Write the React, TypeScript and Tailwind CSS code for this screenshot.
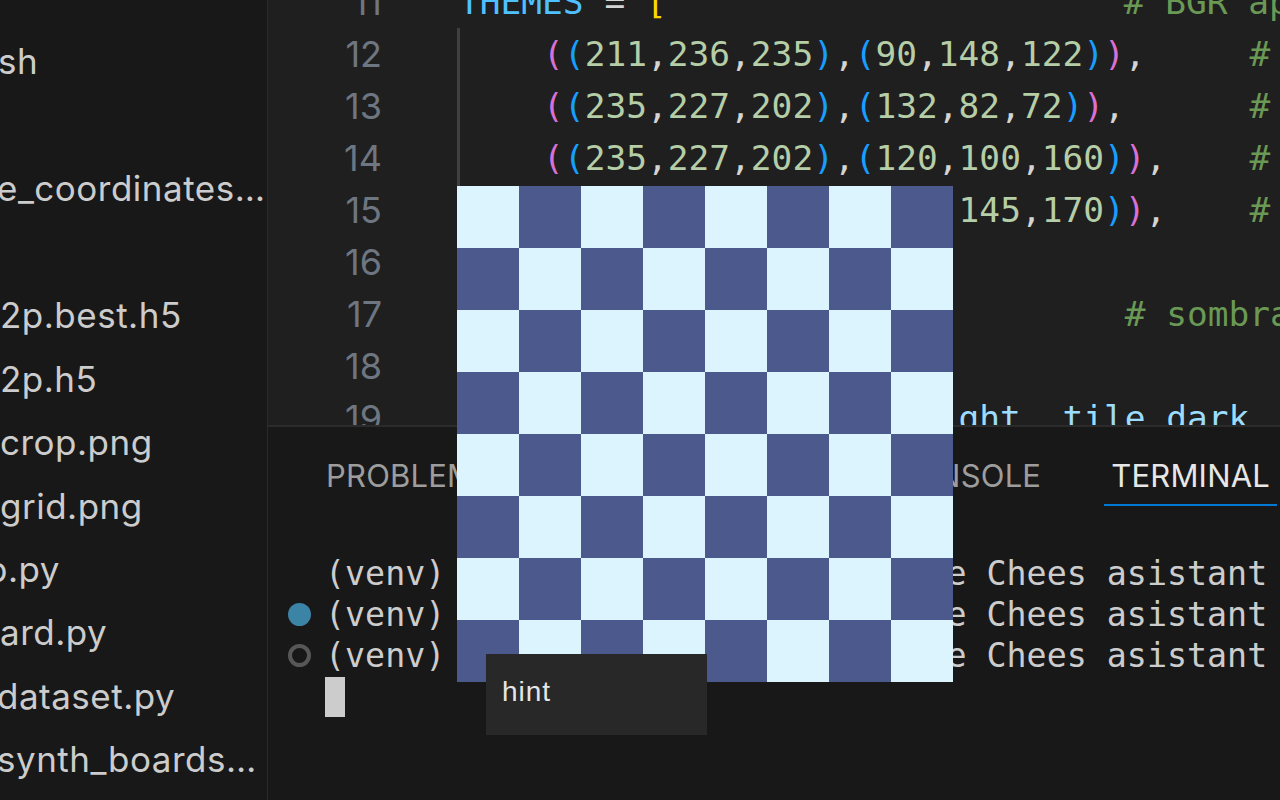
const files = [
  { name: "sh", shift: "-ml-[2px]" },
  { name: "", shift: "" },
  { name: "e_coordinates…", shift: "-ml-[3px]" },
  { name: "", shift: "" },
  { name: "2p.best.h5", shift: "" },
  { name: "2p.h5", shift: "" },
  { name: "crop.png", shift: "" },
  { name: "grid.png", shift: "" },
  { name: "p.py", shift: "-ml-[14px]" },
  { name: "ard.py", shift: "" },
  { name: "dataset.py", shift: "-ml-[3px]" },
  { name: "synth_boards…", shift: "-ml-[3px]" },
];

const C = {
  var: "text-[#4fc1ff]",
  id: "text-[#9cdcfe]",
  op: "text-[#d4d4d4]",
  br: "text-[#ffd700]",
  p1: "text-[#da70d6]",
  p2: "text-[#179fff]",
  num: "text-[#b5cea8]",
  cm: "text-[#6a9955]",
  kw: "text-[#569cd6]",
  fn: "text-[#dcdcaa]",
};

type Tok = [string, string];

function Tuple({ a, b }: { a: string[]; b: string[] }) {
  const nums = (xs: string[]) =>
    xs.map((n, i) => (
      <span key={i}>
        <span className={C.num}>{n}</span>
        {i < xs.length - 1 && <span className={C.op}>,</span>}
      </span>
    ));
  return (
    <>
      {"    "}
      <span className={C.p1}>(</span>
      <span className={C.p2}>(</span>
      {nums(a)}
      <span className={C.p2}>)</span>
      <span className={C.op}>,</span>
      <span className={C.p2}>(</span>
      {nums(b)}
      <span className={C.p2}>)</span>
      <span className={C.p1}>)</span>
      <span className={C.op}>,</span>
    </>
  );
}

function Line({ children }: { children?: React.ReactNode }) {
  return <div className="h-[52px] leading-[52px] whitespace-pre">{children}</div>;
}

function Toks({ toks }: { toks: Tok[] }) {
  return (
    <>
      {toks.map(([t, c], i) => (
        <span key={i} className={c}>
          {t}
        </span>
      ))}
    </>
  );
}

function Editor() {
  return (
    <div className="h-[427px] bg-[#1f1f1f] border-b-2 border-[#2b2b2b] flex overflow-hidden">
      {/* gutter */}
      <div className="w-[191px] shrink-0 pr-[77px] mt-[-24px] text-right font-['Inter',sans-serif] text-[36px] text-[#6e7681]">
        {[11, 12, 13, 14, 15, 16, 17, 18, 19].map((n) => (
          <div key={n} className="h-[52px] leading-[52px]">
            {n}
          </div>
        ))}
      </div>
      {/* code */}
      <div className="flex-1 mt-[-24px] font-['DejaVu_Sans_Mono',monospace] text-[34.5px] text-[#d4d4d4]">
        <Line>
          <Toks
            toks={[
              ["THEMES", C.var],
              [" = ", C.op],
              ["[", C.br],
              ["                      # BGR aproximados", C.cm],
            ]}
          />
        </Line>
        <div className="-ml-[2px] border-l-[3px] border-[#404040]">
          <Line>
            <Tuple a={["211", "236", "235"]} b={["90", "148", "122"]} />
            <span className={C.cm}>{"     # verde"}</span>
          </Line>
          <Line>
            <Tuple a={["235", "227", "202"]} b={["132", "82", "72"]} />
            <span className={C.cm}>{"      # azul"}</span>
          </Line>
          <Line>
            <Tuple a={["235", "227", "202"]} b={["120", "100", "160"]} />
            <span className={C.cm}>{"    # morado"}</span>
          </Line>
          <Line>
            <Tuple a={["235", "227", "202"]} b={["110", "145", "170"]} />
            <span className={C.cm}>{"    # gris"}</span>
          </Line>
          <Line>
            <span className={C.br}>]</span>
          </Line>
          <Line>
            <Toks
              toks={[
                ["SHADOW_ALPHA", C.var],
                [" = ", C.op],
                ["0.35", C.num],
                ["             # sombra de piezas", C.cm],
              ]}
            />
          </Line>
          <Line />
          <Line>
            <Toks
              toks={[
                ["def ", C.kw],
                ["paint", C.fn],
                ["(", C.op],
                ["board", C.id],
                [", ", C.op],
                ["tile_light", C.id],
                [", ", C.op],
                ["tile_dark", C.id],
                [", ", C.op],
                ["shadow", C.id],
                ["):", C.op],
              ]}
            />
          </Line>
        </div>
      </div>
    </div>
  );
}

function Panel() {
  const prompt = "(venv) juanp@MacBook-Air-de-Jose Chees asistant % python3 main.py";
  return (
    <div className="flex-1 bg-[#181818] pt-[29px] overflow-hidden">
      <div className="flex items-start font-['Inter',sans-serif] text-[31px] tracking-[0.2px]">
        <div className="ml-[51px] px-[7px] leading-[40px] pb-[10px] text-[#9d9d9d]">PROBLEMS</div>
        <div className="ml-[58px] px-[7px] leading-[40px] pb-[10px] text-[#9d9d9d]">OUTPUT</div>
        <div className="flex-1" />
        <div className="mr-[5px] px-[7px] leading-[40px] pb-[10px] text-[#9d9d9d]">DEBUG CONSOLE</div>
        <div className="ml-[51px] mr-[3px] px-[7px] leading-[40px] pb-[8px] border-b-2 border-[#0078d4] text-[#e7e7e7]">
          TERMINAL
        </div>
      </div>
      <div className="mt-[47px] font-['DejaVu_Sans_Mono',monospace] text-[33.3px] text-[#cccccc]">
        {[null, "fill", "ring"].map((deco, i) => (
          <div key={i} className="h-[41px] flex items-center">
            <div className="w-[57px] pl-[20px] shrink-0">
              {deco === "fill" && <div className="w-[23px] h-[23px] rounded-full bg-[#3c84a6]" />}
              {deco === "ring" && <div className="w-[23px] h-[23px] rounded-full border-[4px] border-[#575757]" />}
            </div>
            <div className="whitespace-pre leading-[41px]">{prompt}</div>
          </div>
        ))}
        <div className="h-[41px] flex items-center">
          <div className="w-[57px] shrink-0" />
          <div className="w-[20px] h-[40px] bg-[#cccccc]" />
        </div>
      </div>
    </div>
  );
}

function Board() {
  const cells = Array.from({ length: 64 }, (_, i) => (Math.floor(i / 8) + (i % 8)) % 2 === 0);
  return (
    <div className="absolute left-[457px] top-[186px] grid grid-cols-8 w-[496px] h-[496px]">
      {cells.map((light, i) => (
        <div key={i} className={light ? "bg-[#dcf4fd]" : "bg-[#4c598c]"} />
      ))}
    </div>
  );
}

export default function App() {
  return (
    <div className="relative w-[1280px] h-[800px] flex overflow-hidden bg-[#181818]">
      {/* explorer, scrolled so names are cut on the left */}
      <div className="w-[268px] shrink-0 border-r border-[#2b2b2b] bg-[#181818] pt-[30px] overflow-hidden font-['Inter',sans-serif] text-[35px] tracking-[0.5px] text-[#cccccc]">
        {files.map((f, i) => (
          <div key={i} className="h-[63.45px] flex items-center whitespace-nowrap">
            <span className={f.shift}>{f.name}</span>
          </div>
        ))}
      </div>
      <div className="flex-1 flex flex-col min-w-0">
        <Editor />
        <Panel />
      </div>

      {/* board preview window + hint tooltip */}
      <Board />
      <div className="absolute left-[486px] top-[654px] w-[221px] h-[81px] bg-[#282828] pl-[16px] pt-[22px] font-['Liberation_Sans',sans-serif] text-[28px] leading-[32px] tracking-[1px] text-[#e6e6e6]">
        hint
      </div>
    </div>
  );
}
